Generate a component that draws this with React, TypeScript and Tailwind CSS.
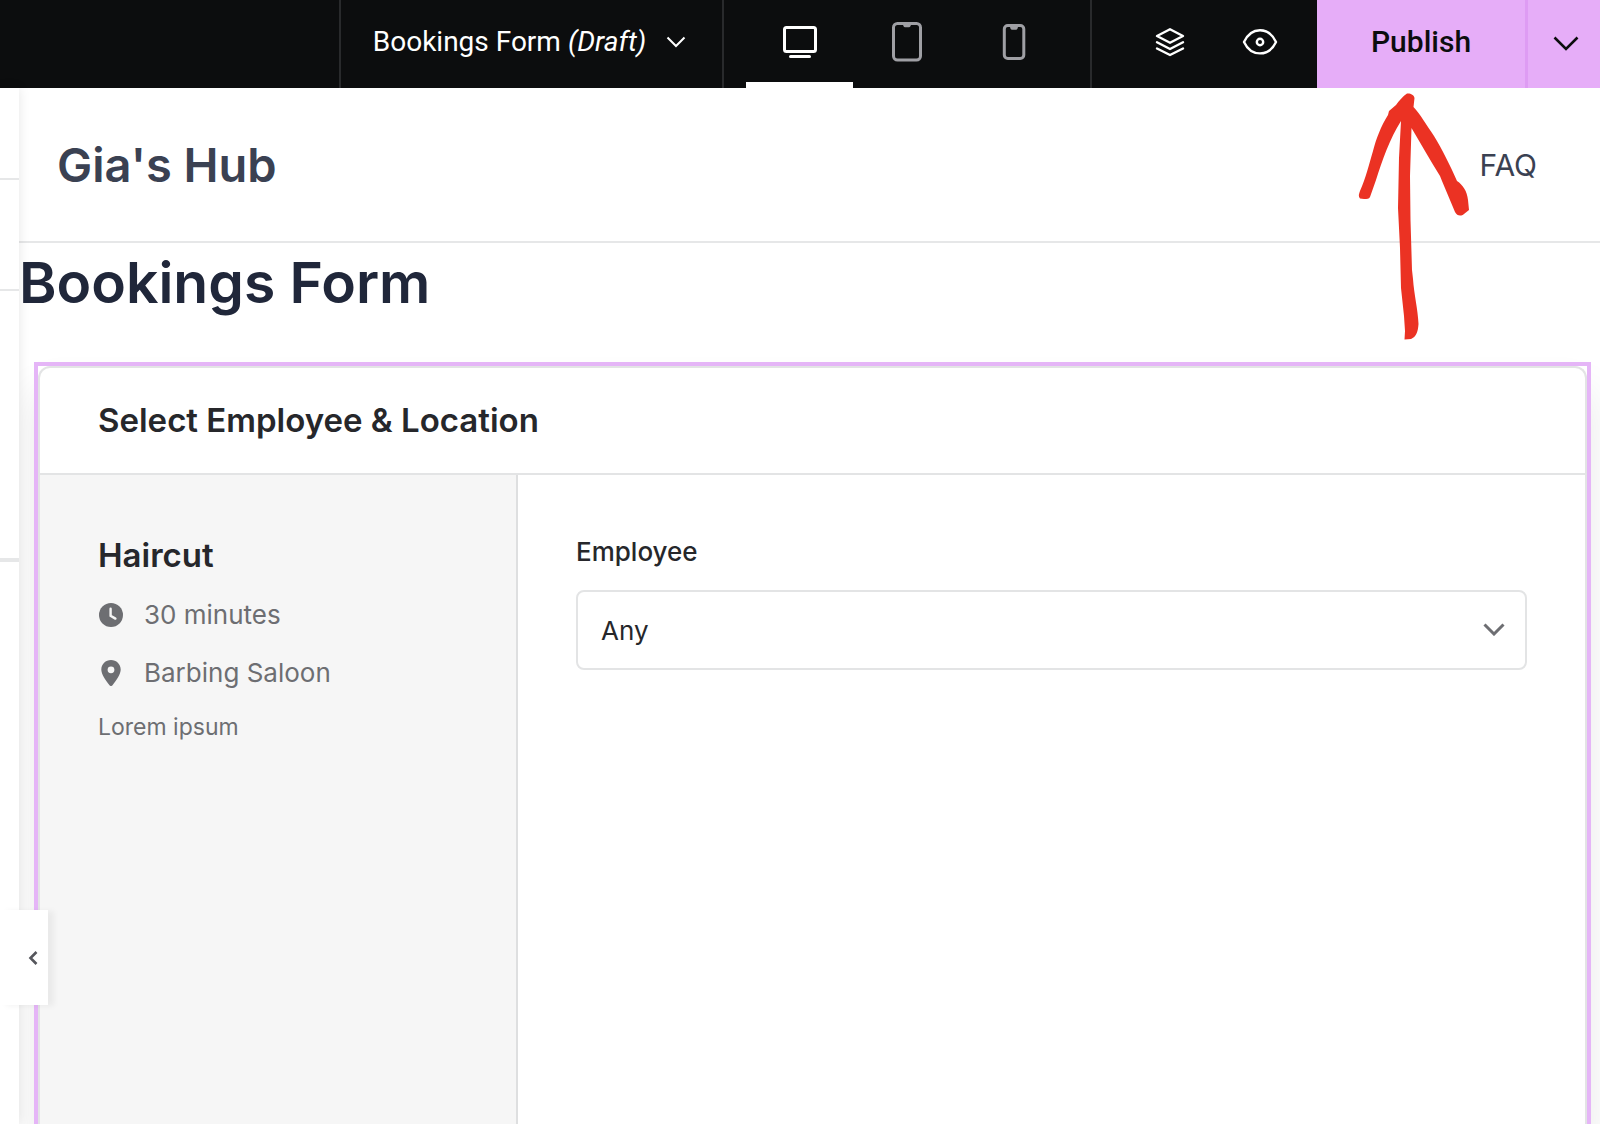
import { useState } from "react";
import type { ReactNode } from "react";

function DesktopIcon() {
  return (
    <svg width="36" height="34" viewBox="0 0 36 34" fill="none" stroke="currentColor" strokeWidth="3" aria-hidden="true">
      <rect x="2.5" y="2.5" width="31" height="24" rx="2" />
      <path d="M8.500 31.500h19" strokeLinecap="round" />
    </svg>
  );
}

function TabletIcon() {
  return (
    <svg width="32" height="42" viewBox="0 0 32 42" fill="none" stroke="currentColor" strokeWidth="3" aria-hidden="true">
      <rect x="2.5" y="2.5" width="27" height="36.5" rx="4" />
      <path d="M12 3h8c0 2-.8 3.200-2 3.200h-4c-1.200 0-2-1.200-2-3.200z" fill="currentColor" stroke="none" />
    </svg>
  );
}

function PhoneIcon() {
  return (
    <svg width="24" height="38" viewBox="0 0 24 38" fill="none" stroke="currentColor" strokeWidth="3" aria-hidden="true">
      <rect x="2.300" y="2.500" width="19.500" height="33" rx="3.500" />
      <path d="M8 3h8c0 2.400-.8 3.800-2 3.800h-4c-1.200 0-2-1.400-2-3.800z" fill="currentColor" stroke="none" />
    </svg>
  );
}

function LayersIcon() {
  return (
    <svg width="30" height="30" viewBox="0 0 30 30" fill="none" stroke="currentColor" strokeWidth="2.4" strokeLinecap="round" strokeLinejoin="round" aria-hidden="true">
      <path d="M15 2.200 28 9 15 15.700 2 9z" />
      <path d="M2 15.200 15 22l13-6.800" />
      <path d="M2 21.500 15 28l13-6.500" />
    </svg>
  );
}

function EyeIcon() {
  return (
    <svg width="36" height="28" viewBox="0 0 36 28" fill="none" stroke="currentColor" strokeWidth="2.400" aria-hidden="true">
      <path d="M2 14C5.500 6.500 11.300 2.200 18 2.200S30.500 6.500 34 14C30.500 21.500 24.700 25.400 18 25.400S5.500 21.500 2 14z" strokeLinejoin="round" />
      <circle cx="18" cy="14" r="3.200" />
    </svg>
  );
}

function ClockIcon() {
  return (
    <svg width="24" height="24" viewBox="0 0 24 24" aria-hidden="true">
      <circle cx="12" cy="12" r="12" fill="currentColor" />
      <path d="M11.600 5.800v7l4.800 2.800" fill="none" stroke="#f6f6f6" strokeWidth="2.400" strokeLinecap="round" />
    </svg>
  );
}

function PinIcon() {
  return (
    <svg width="24" height="26" viewBox="0 0 24 26" aria-hidden="true">
      <path fill="currentColor" fillRule="evenodd" d="M12 0c5.400 0 9.700 4.200 9.700 9.500 0 4.500-4.200 10.800-8.200 15.700a2 2 0 0 1-3 0C6.500 20.300 2.300 14 2.300 9.500 2.300 4.200 6.600 0 12 0zm0 6.400a3.400 3.400 0 1 0 0 6.800 3.400 3.400 0 0 0 0-6.800z" />
    </svg>
  );
}

function Chevron({ width, stroke, className }: { width: number; stroke: number; className?: string }) {
  return (
    <svg width={width} height={width / 2 + 2} viewBox={`0 0 ${width} ${width / 2 + 2}`} fill="none" stroke="currentColor" strokeWidth={stroke} className={className} aria-hidden="true">
      <path d={`M1.500 1.500 L${width / 2} ${width / 2} L${width - 1.5} 1.500`} />
    </svg>
  );
}

function DeviceTab({ label, active, onClick, children }: { label: string; active: boolean; onClick: () => void; children: ReactNode }) {
  return (
    <button
      type="button"
      aria-label={label}
      aria-pressed={active}
      onClick={onClick}
      className={
        "flex w-[107px] items-center justify-center border-y-6 border-t-transparent pb-1 " +
        (active ? "border-b-white text-white" : "border-b-transparent text-[#9f9fa4]")
      }
    >
      {children}
    </button>
  );
}

function TopBar() {
  const [device, setDevice] = useState("desktop");
  return (
    <header className="flex h-[88px] shrink-0 justify-end bg-[#0c0d0e] font-[Roboto,sans-serif] text-white">
      <button type="button" className="flex w-[383px] items-center justify-center gap-5 border-l-2 border-[#292a2c] pr-1 pb-1 text-[28px]">
        <span>
          Bookings Form <em>(Draft)</em>
        </span>
        <Chevron width={20} stroke={2} />
      </button>
      <div className="flex w-[370px] border-x-2 border-[#292a2c] pl-[22px]">
        <DeviceTab label="Desktop" active={device === "desktop"} onClick={() => setDevice("desktop")}>
          <DesktopIcon />
        </DeviceTab>
        <DeviceTab label="Tablet" active={device === "tablet"} onClick={() => setDevice("tablet")}>
          <TabletIcon />
        </DeviceTab>
        <DeviceTab label="Phone" active={device === "phone"} onClick={() => setDevice("phone")}>
          <PhoneIcon />
        </DeviceTab>
      </div>
      <div className="flex w-[225px] items-center justify-end gap-[57px] pr-[39px] pb-1">
        <button type="button" aria-label="Structure">
          <LayersIcon />
        </button>
        <button type="button" aria-label="Preview">
          <EyeIcon />
        </button>
      </div>
      <button type="button" className="w-[208px] bg-[#e6adf8] pb-1.5 text-[30px] font-medium text-[#0c0d0e]">
        Publish
      </button>
      <button type="button" aria-label="Publish options" className="flex w-[75px] items-center justify-center border-l-3 border-[#de9cf3] bg-[#e6adf8] pb-0.5 pl-1 text-[#0c0d0e]">
        <Chevron width={26} stroke={2.6} />
      </button>
    </header>
  );
}

function RedArrow() {
  return (
    <svg className="pointer-events-none absolute top-0 right-[124px] z-20" width="118" height="256" viewBox="0 0 118 256" fill="#eb3223" aria-hidden="true">
      <path d="M49 5.500C52 5 56 6.500 56.500 10L55.500 19C62 26 68 36 76 48C84 61 92 77 99 93C105 97 109 103 110 112L111 122L106 126C103 128.500 99 128 97 124L84 93L82 88C72 72 63 56 53.500 40L52 88L52.500 132L54 182L55 191C56 206 60 222 60.500 236C60 244 58 249 53 251L46.500 251.500L47 243L46 228L43 200L42 160L40 120L41 70L43 33C32 50 24 73 18 92L12 109C11 111 9 111 6 111L2 110.500C0 108 1 106 2 103C8 90 11 76 15 63C18 51 23 38 30 27L31 23L38 17C41 13 45 8 49 5.500Z" />
    </svg>
  );
}

function SiteHeader() {
  return (
    <div className="relative flex h-[155px] shrink-0 items-center justify-between border-b-2 border-[#e6e7e8] pt-0.5 pr-[63px] pl-[38px] text-[#3a4152]">
      <a href="#home" className="text-[47px] font-semibold">Gia's Hub</a>
      <a href="#faq" className="text-[30px]">FAQ</a>
      <RedArrow />
    </div>
  );
}

function BookingForm() {
  return (
    <section className="mt-[42px] mr-[9px] ml-[15px] flex grow flex-col border-4 border-b-0 border-[#e5b5f7] shadow-[0_30px_40px_rgba(0,0,0,0.09)]">
      <div className="flex grow flex-col rounded-t-[12px] border-2 border-b-0 border-[#e3e4e5] bg-white text-[#26272b]">
        <h2 className="flex h-[107px] items-center border-b-2 border-[#e3e4e5] pl-[58px] text-[33px] font-semibold">
          Select Employee &amp; Location
        </h2>
        <div className="flex grow">
          <aside className="w-[478px] shrink-0 border-r-2 border-[#dedfe0] bg-[#f6f6f6] pt-[60px] pl-[58px] text-[#6d6e72]">
            <h3 className="text-[33px] leading-10 font-semibold text-[#26272b]">Haircut</h3>
            <ul className="mt-5 flex flex-col gap-[18px] pl-px text-[26px] leading-10">
              <li className="flex items-center gap-[21px]">
                <ClockIcon />
                30 minutes
              </li>
              <li className="flex items-center gap-[21px]">
                <PinIcon />
                Barbing Saloon
              </li>
            </ul>
            <p className="mt-[18px] text-[23px] leading-8">Lorem ipsum</p>
          </aside>
          <div className="flex grow flex-col px-[58px] pt-[59px]">
            <label htmlFor="employee" className="text-[26px] leading-9 font-medium">Employee</label>
            <div className="relative mt-5">
              <select id="employee" className="block h-20 w-full appearance-none rounded-[8px] border-2 border-[#e3e4e5] bg-white pl-[23px] text-[26px]">
                <option>Any</option>
              </select>
              <Chevron width={22} stroke={3} className="pointer-events-none absolute top-[33px] right-[22px] text-[#6d6e72]" />
            </div>
          </div>
        </div>
      </div>
    </section>
  );
}

function EditorPanel() {
  return (
    <aside className="relative z-10 w-[19px] shrink-0 bg-white shadow-[0_0_12px_rgba(0,0,0,0.10)]">
      <div className="h-[92px] border-b-2 border-[#e6e7e8]" />
      <div className="h-[111px] border-b-2 border-[#e6e7e8]" />
      <div className="h-[271px] border-b-4 border-[#e6e7e8]" />
      <button
        type="button"
        aria-label="Collapse panel"
        className="absolute top-[822px] left-0 flex h-[95px] w-12 items-center justify-end bg-white pr-2.5 text-[#55565c] shadow-[6px_1px_6px_rgba(0,0,0,0.05)]"
      >
        <svg width="10" height="16" viewBox="0 0 10 16" fill="none" stroke="currentColor" strokeWidth="2.600" aria-hidden="true">
          <path d="M8.500 2 2.500 8l6 6" />
        </svg>
      </button>
    </aside>
  );
}

export default function App() {
  return (
    <div className="flex min-h-screen flex-col overflow-hidden bg-white font-[Inter,sans-serif]">
      <TopBar />
      <div className="flex grow">
        <EditorPanel />
        <main className="flex min-w-0 grow flex-col">
          <SiteHeader />
          <h1 className="mt-0.5 text-[57px] leading-[75px] font-semibold text-[#20273a]">Bookings Form</h1>
          <BookingForm />
        </main>
      </div>
    </div>
  );
}
